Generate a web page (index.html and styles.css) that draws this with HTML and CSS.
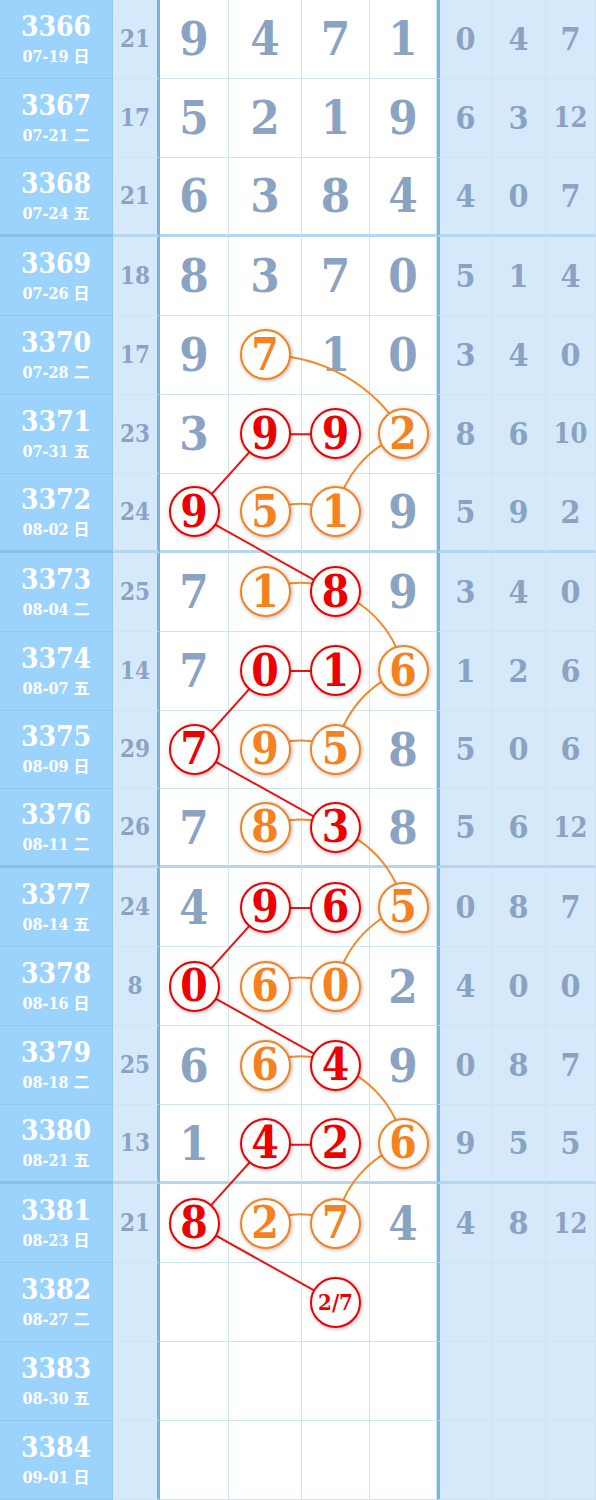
FILE: index.html
```html
<!DOCTYPE html>
<html lang="zh">
<head>
    <meta charset="UTF-8">
    <meta name="viewport" content="width=device-width, initial-scale=1.0">
    <title>走势图</title>
    <link rel="stylesheet" href="styles.css">
</head>
<body>
    <div class="board" id="board">
        <svg class="links" id="links" width="596" height="1500" viewBox="0 0 596 1500"></svg>
    </div>

    <script>
        const rows = [
            ['3366', '07-19 日', 21, [9, 4, 7, 1], [0, 4, 7], '----'],
            ['3367', '07-21 二', 17, [5, 2, 1, 9], [6, 3, 12], '----'],
            ['3368', '07-24 五', 21, [6, 3, 8, 4], [4, 0, 7], '----'],
            ['3369', '07-26 日', 18, [8, 3, 7, 0], [5, 1, 4], '----'],
            ['3370', '07-28 二', 17, [9, 7, 1, 0], [3, 4, 0], '-o--'],
            ['3371', '07-31 五', 23, [3, 9, 9, 2], [8, 6, 10], '-rro'],
            ['3372', '08-02 日', 24, [9, 5, 1, 9], [5, 9, 2], 'roo-'],
            ['3373', '08-04 二', 25, [7, 1, 8, 9], [3, 4, 0], '-or-'],
            ['3374', '08-07 五', 14, [7, 0, 1, 6], [1, 2, 6], '-rro'],
            ['3375', '08-09 日', 29, [7, 9, 5, 8], [5, 0, 6], 'roo-'],
            ['3376', '08-11 二', 26, [7, 8, 3, 8], [5, 6, 12], '-or-'],
            ['3377', '08-14 五', 24, [4, 9, 6, 5], [0, 8, 7], '-rro'],
            ['3378', '08-16 日', 8, [0, 6, 0, 2], [4, 0, 0], 'roo-'],
            ['3379', '08-18 二', 25, [6, 6, 4, 9], [0, 8, 7], '-or-'],
            ['3380', '08-21 五', 13, [1, 4, 2, 6], [9, 5, 5], '-rro'],
            ['3381', '08-23 日', 21, [8, 2, 7, 4], [4, 8, 12], 'roo-'],
            ['3382', '08-27 二', '', ['', '', '2/7', ''], ['', '', ''], '--r-'],
            ['3383', '08-30 五', '', ['', '', '', ''], ['', '', ''], '----'],
            ['3384', '09-01 日', '', ['', '', '', ''], ['', '', ''], '----']
        ];

        // red: straight lines, orange: arcs [row, col, row, col, sweep]
        const redLinks = [
            [5, 1, 5, 2], [5, 1, 6, 0], [6, 0, 7, 2],
            [8, 1, 8, 2], [8, 1, 9, 0], [9, 0, 10, 2],
            [11, 1, 11, 2], [11, 1, 12, 0], [12, 0, 13, 2],
            [14, 1, 14, 2], [14, 1, 15, 0], [15, 0, 16, 2]
        ];
        const orangeLinks = [
            [4, 1, 5, 3, 1], [5, 3, 6, 2, 0], [6, 1, 6, 2, 1],
            [7, 1, 7, 2, 1], [7, 2, 8, 3, 1], [8, 3, 9, 2, 0], [9, 1, 9, 2, 1],
            [10, 1, 10, 2, 1], [10, 2, 11, 3, 1], [11, 3, 12, 2, 0], [12, 1, 12, 2, 1],
            [13, 1, 13, 2, 1], [13, 2, 14, 3, 1], [14, 3, 15, 2, 0], [15, 1, 15, 2, 1]
        ];

        const board = document.getElementById('board');
        const svg = document.getElementById('links');

        const cell = (cls, r) => {
            const el = document.createElement('div');
            el.className = 'cell ' + cls + ((r + 2) % 4 === 0 && r < 18 ? ' group-end' : '');
            board.appendChild(el);
            return el;
        };

        rows.forEach((row, r) => {
            const [issue, date, sum, digits, miss, marks] = row;

            const first = cell('issue', r);
            first.innerHTML = `<span class="issue-no">${issue}</span><span class="issue-date">${date}</span>`;

            cell('sum', r).textContent = sum;

            digits.forEach((d, c) => {
                const el = cell('num', r);
                el.id = `d-${r}-${c}`;
                if (marks[c] === '-') {
                    el.textContent = d;
                } else {
                    const ball = document.createElement('span');
                    ball.className = 'ball ' + (marks[c] === 'r' ? 'red' : 'orange') + (String(d).length > 2 ? ' small' : '');
                    ball.textContent = d;
                    el.appendChild(ball);
                }
            });

            miss.forEach((m, i) => {
                const el = cell('miss' + (i === 0 ? ' miss-first' : ''), r);
                el.textContent = m;
                if (String(m).length > 1) el.classList.add('two');
            });
        });

        const center = (r, c) => {
            const box = board.getBoundingClientRect();
            const el = document.getElementById(`d-${r}-${c}`).getBoundingClientRect();
            return [el.left - box.left + el.width / 2, el.top - box.top + el.height / 2];
        };

        const NS = 'http://www.w3.org/2000/svg';

        redLinks.forEach(([r1, c1, r2, c2]) => {
            const [x1, y1] = center(r1, c1);
            const [x2, y2] = center(r2, c2);
            const line = document.createElementNS(NS, 'line');
            line.setAttribute('x1', x1);
            line.setAttribute('y1', y1);
            line.setAttribute('x2', x2);
            line.setAttribute('y2', y2);
            line.setAttribute('class', 'link-red');
            svg.appendChild(line);
        });

        orangeLinks.forEach(([r1, c1, r2, c2, sweep]) => {
            const [x1, y1] = center(r1, c1);
            const [x2, y2] = center(r2, c2);
            const rad = Math.hypot(x2 - x1, y2 - y1);
            const path = document.createElementNS(NS, 'path');
            path.setAttribute('d', `M ${x1} ${y1} A ${rad} ${rad} 0 0 ${sweep} ${x2} ${y2}`);
            path.setAttribute('class', 'link-orange');
            svg.appendChild(path);
        });
    </script>
</body>
</html>
```

FILE: styles.css
```css
body {
    margin: 0;
    font-family: "DejaVu Serif Condensed", "DejaVu Serif", "Noto Sans CJK SC", serif;
    font-weight: bold;
    background-color: #fff;
}

.board {
    position: relative;
    width: 596px;
    height: 1500px;
    display: grid;
    grid-template-columns: 113px 47px 69px 73px 68px 67px 55px 54px 50px;
    grid-template-rows: repeat(19, 1fr);
}

.links {
    position: absolute;
    top: 0;
    left: 0;
    z-index: 1;
    pointer-events: none;
}

.link-red {
    stroke: #ee1111;
    stroke-width: 2;
}

.link-orange {
    fill: none;
    stroke: #f58a2c;
    stroke-width: 2;
}

.cell {
    box-sizing: border-box;
    display: flex;
    align-items: center;
    justify-content: center;
    border-right: 1px solid #cde4f3;
    border-bottom: 1px solid #cde4f3;
    line-height: 1;
    color: #8aa3c3;
}

.cell.group-end {
    border-bottom: 3px solid #b5d6ec;
}

.issue {
    flex-direction: column;
    background-color: #9bd3fd;
    color: #fff;
    border-right-color: #8ec9f3;
    border-bottom-color: #8ec9f3;
}

.issue.group-end {
    border-bottom-color: #86c1ec;
}

.issue-no {
    font-size: 28px;
}

.issue-date {
    font-size: 16px;
    margin-top: 8px;
}

.sum {
    background-color: #d5e9fa;
    border-right: 3px solid #7eb2d9;
    font-size: 24px;
}

.num {
    background-color: #fff;
    font-size: 47px;
}

.miss {
    background-color: #d5e9fa;
    font-size: 32px;
}

.miss.two {
    font-size: 27px;
}

.miss-first {
    border-left: 3px solid #7eb2d9;
}

.ball {
    position: relative;
    z-index: 2;
    box-sizing: border-box;
    width: 51px;
    height: 51px;
    border-radius: 50%;
    border: 2px solid;
    background-color: #fff;
    display: flex;
    align-items: center;
    justify-content: center;
    font-size: 44px;
    box-shadow: 1px 1px 4px rgba(0, 0, 0, 0.3);
}

.ball.red {
    color: #ee0000;
    border-color: #ee0000;
}

.ball.orange {
    color: #f5821f;
    border-color: #f5821f;
}

.ball.small {
    font-size: 22px;
}
```
